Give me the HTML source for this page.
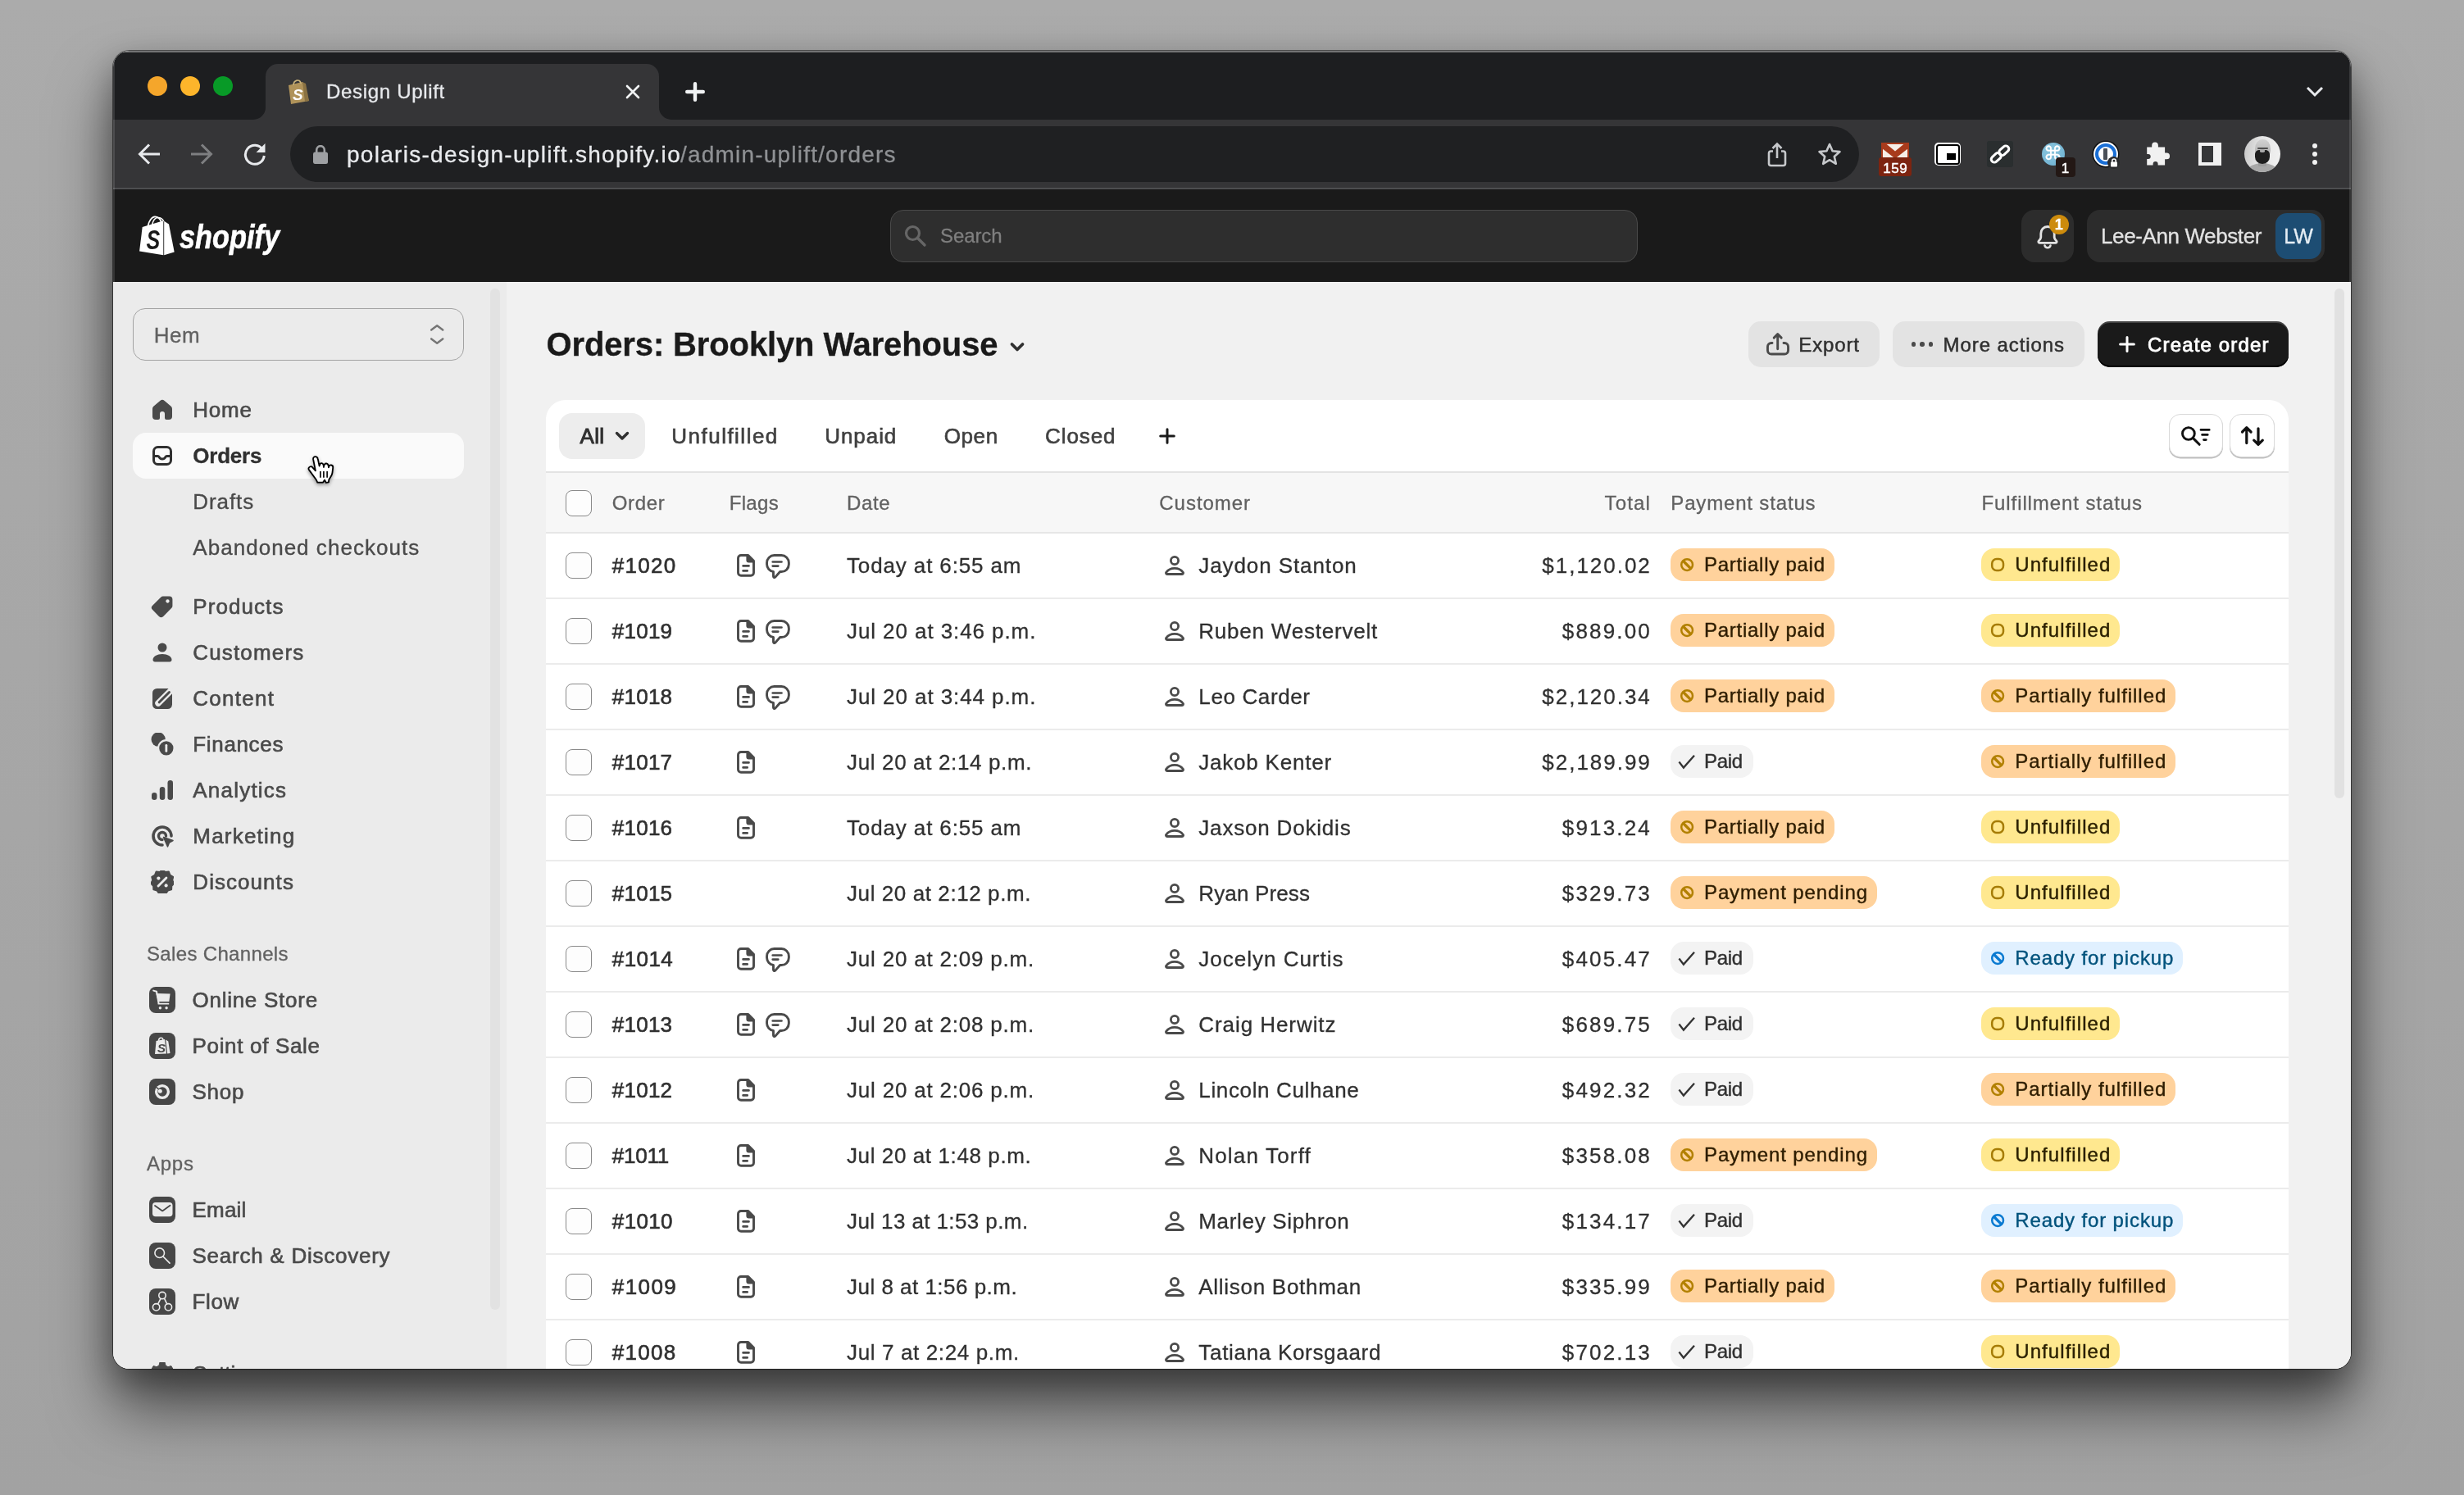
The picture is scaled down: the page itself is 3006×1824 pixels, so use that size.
<!DOCTYPE html>
<html lang="en"><head><meta charset="utf-8"><title>Design Uplift</title>
<style>

*{box-sizing:border-box;margin:0;padding:0}
html,body{width:3006px;height:1824px;overflow:hidden}
body{background:#a6a6a6;font-family:"Liberation Sans",sans-serif;position:relative;-webkit-font-smoothing:antialiased}
#bg{position:absolute;left:0;top:0;width:3006px;height:1824px;background:linear-gradient(180deg,#ababab 0%,#a6a6a6 55%,#a2a2a2 100%)}
#shadow{position:absolute;left:138px;top:62px;width:2730px;height:1608px;border-radius:20px;
 box-shadow:0 0 0 1px rgba(0,0,0,.5),0 48px 76px 0 rgba(0,0,0,.54),0 14px 38px rgba(0,0,0,.3)}
#win{position:absolute;left:138px;top:62px;width:2730px;height:1608px;border-radius:20px;overflow:hidden;background:#f1f1f1}
#in{position:absolute;left:-138px;top:-62px;width:3006px;height:1824px;will-change:transform}
#in div,#in span.t,#in svg{position:absolute}
span.t{white-space:nowrap;display:block;-webkit-text-stroke:0.3px}
.cb{border:1.7px solid #8a8a8a;border-radius:8px;background:#fdfdfd}
.rowline{background:#ebebeb}
.bdg{border-radius:16px}

</style></head>
<body>
<div id="bg"></div>
<div id="shadow"></div>
<div id="win"><div id="in">
<div style="left:138px;top:344px;width:480px;height:1330px;background:#ebebeb"></div>
<div style="left:598px;top:352px;width:12px;height:1246px;background:#e2e2e2;border-radius:6px"></div>
<div style="left:162px;top:376px;width:404px;height:64px;border:1.300px solid #a3a3a3;border-radius:15px;background:#ebebeb"></div>
<span class="t" style="top:390.5px;height:36px;line-height:36px;font-size:26px;color:#616161;letter-spacing:0.547px;left:187.7px;">Hem</span>
<svg style="left:521px;top:390px;" width="24" height="36" viewBox="0 0 24 36"><path d="M5.200 12.600 L12.200 7.300 L19.200 12.600 M5.200 23.400 L12.200 28.700 L19.200 23.400" stroke="#767676" stroke-width="2.500" fill="none" stroke-linecap="round" stroke-linejoin="round"/></svg>
<div style="left:162px;top:528px;width:404px;height:56px;background:#fafafa;border-radius:16px"></div>
<svg style="left:184px;top:486px;" width="28" height="28" viewBox="0 0 28 28"><path d="M14 1.800 c-.9 0 -1.700 .3 -2.400 .9 L3.600 9.600 C2.600 10.500 2 11.700 2 13 V22 a4 4 0 0 0 4 4 H9 a2 2 0 0 0 2 -2 V19 a3 3 0 0 1 6 0 V24 a2 2 0 0 0 2 2 H22 a4 4 0 0 0 4 -4 V13 c0 -1.300 -.6 -2.500 -1.600 -3.400 L16.400 2.700 C15.700 2.100 14.900 1.800 14 1.800Z" fill="#4a4a4a"/></svg>
<span class="t" style="top:482px;height:36px;line-height:36px;font-size:26px;color:#4a4a4a;font-weight:500;letter-spacing:0.747px;left:235.3px;-webkit-text-stroke:0.62px #4a4a4a;">Home</span>
<svg style="left:184px;top:542px;" width="28" height="28" viewBox="0 0 28 28"><rect x="3.500" y="3.500" width="21" height="21" rx="5" stroke="#303030" stroke-width="3" fill="none"/><path d="M3.500 14.500 H8.500 c.8 0 1.300 .5 1.700 1.200 c.8 1.400 2 2.300 3.800 2.300 s3 -.9 3.800 -2.300 c.4 -.7 .9 -1.200 1.700 -1.200 H24.500" stroke="#303030" stroke-width="3" fill="none"/></svg>
<span class="t" style="top:538px;height:36px;line-height:36px;font-size:26px;color:#303030;font-weight:700;letter-spacing:-0.233px;left:235.3px;">Orders</span>
<span class="t" style="top:594px;height:36px;line-height:36px;font-size:26px;color:#4a4a4a;letter-spacing:0.911px;left:235.3px;-webkit-text-stroke:0.35px;">Drafts</span>
<span class="t" style="top:650px;height:36px;line-height:36px;font-size:26px;color:#4a4a4a;letter-spacing:1.033px;left:235.3px;-webkit-text-stroke:0.35px;">Abandoned checkouts</span>
<svg style="left:184px;top:726px;" width="28" height="28" viewBox="0 0 28 28"><g transform="translate(-1.12 -1.12) scale(1.08)"><path d="M14.800 2.500 H22 a3.500 3.500 0 0 1 3.500 3.500 V13.200 c0 .9 -.4 1.800 -1 2.500 L15.200 25 a3.500 3.500 0 0 1 -5 0 L3 17.800 a3.500 3.500 0 0 1 0 -5 L12.300 3.500 c.7 -.6 1.600 -1 2.500 -1Z" fill="#4a4a4a"/><circle cx="20" cy="8" r="2" fill="#ebebeb"/></g></svg>
<span class="t" style="top:722px;height:36px;line-height:36px;font-size:26px;color:#4a4a4a;font-weight:500;letter-spacing:1.070px;left:235.3px;-webkit-text-stroke:0.62px #4a4a4a;">Products</span>
<svg style="left:184px;top:782px;" width="28" height="28" viewBox="0 0 28 28"><circle cx="14" cy="8" r="5.500" fill="#4a4a4a"/><path d="M2.500 23 c0 -4 5 -7 11.500 -7 s11.500 3 11.500 7 c0 1.500 -1 2.500 -2.500 2.500 H5 c-1.500 0 -2.500 -1 -2.500 -2.500Z" fill="#4a4a4a"/></svg>
<span class="t" style="top:778px;height:36px;line-height:36px;font-size:26px;color:#4a4a4a;font-weight:500;letter-spacing:1.150px;left:235.3px;-webkit-text-stroke:0.62px #4a4a4a;">Customers</span>
<svg style="left:184px;top:838px;" width="28" height="28" viewBox="0 0 28 28"><rect x="2" y="2" width="24" height="25" rx="5.5" fill="#4a4a4a"/><path d="M9 20 L24.500 4.500" stroke="#ebebeb" stroke-width="7.5" stroke-linecap="round"/><path d="M7 22.500 L8.300 17.500 L12.300 21.300 Z" fill="#ebebeb"/><path d="M10.200 18.800 L22.500 6.500" stroke="#4a4a4a" stroke-width="3" stroke-linecap="round"/></svg>
<span class="t" style="top:834px;height:36px;line-height:36px;font-size:26px;color:#4a4a4a;font-weight:500;letter-spacing:1.254px;left:235.3px;-webkit-text-stroke:0.62px #4a4a4a;">Content</span>
<svg style="left:184px;top:894px;" width="28" height="28" viewBox="0 0 28 28"><g transform="translate(-1.12 -1.12) scale(1.08)"><circle cx="9.500" cy="8.500" r="8" fill="#4a4a4a"/><circle cx="18.500" cy="18.500" r="10" fill="#ebebeb"/><circle cx="18.500" cy="18.500" r="8" fill="#4a4a4a"/><rect x="17.200" y="14" width="2.600" height="9" rx="1.200" fill="#ebebeb"/></g></svg>
<span class="t" style="top:890px;height:36px;line-height:36px;font-size:26px;color:#4a4a4a;font-weight:500;letter-spacing:0.657px;left:235.3px;-webkit-text-stroke:0.62px #4a4a4a;">Finances</span>
<svg style="left:184px;top:950px;" width="28" height="28" viewBox="0 0 28 28"><rect x="1" y="17" width="6.500" height="9" rx="3.200" fill="#4a4a4a"/><rect x="10.800" y="10" width="6.500" height="16" rx="3.200" fill="#4a4a4a"/><rect x="20.500" y="2" width="6.500" height="24" rx="3.200" fill="#4a4a4a"/></svg>
<span class="t" style="top:946px;height:36px;line-height:36px;font-size:26px;color:#4a4a4a;font-weight:500;letter-spacing:1.219px;left:235.3px;-webkit-text-stroke:0.62px #4a4a4a;">Analytics</span>
<svg style="left:184px;top:1006px;" width="28" height="28" viewBox="0 0 28 28"><path d="M25 14 a11 11 0 1 0 -11 11" stroke="#4a4a4a" stroke-width="3.600" fill="none" stroke-linecap="round"/><path d="M18.500 14 a4.500 4.500 0 1 0 -4.500 4.500" stroke="#4a4a4a" stroke-width="3.400" fill="none" stroke-linecap="round"/><path d="M15.500 15.500 L27 19.500 L22.500 22 L20.500 27 Z" fill="#4a4a4a" stroke="#4a4a4a" stroke-width="1.500" stroke-linejoin="round"/></svg>
<span class="t" style="top:1002px;height:36px;line-height:36px;font-size:26px;color:#4a4a4a;font-weight:500;letter-spacing:1.218px;left:235.3px;-webkit-text-stroke:0.62px #4a4a4a;">Marketing</span>
<svg style="left:184px;top:1062px;" width="28" height="28" viewBox="0 0 28 28"><g transform="translate(-1.40 -1.40) scale(1.1)"><path d="M14 .8 l3.200 2.300 l3.900 -.3 l1.400 3.700 l3.400 1.900 l-.9 3.800 l1.900 3.400 l-2.700 2.900 l-.2 3.900 l-3.800 1 l-2.200 3.200 l-3.800 -1.100 l-3.800 1.100 l-2.200 -3.200 l-3.800 -1 l-.2 -3.900 l-2.700 -2.900 l1.900 -3.400 l-.9 -3.800 l3.400 -1.900 l1.400 -3.700 l3.900 .3 Z" fill="#4a4a4a" stroke="#4a4a4a" stroke-width="2" stroke-linejoin="round"/><path d="M9.500 18.500 L18.500 9.500" stroke="#ebebeb" stroke-width="2.600" stroke-linecap="round"/><circle cx="9.800" cy="10" r="1.900" fill="#ebebeb"/><circle cx="18.200" cy="18" r="1.900" fill="#ebebeb"/></g></svg>
<span class="t" style="top:1058px;height:36px;line-height:36px;font-size:26px;color:#4a4a4a;font-weight:500;letter-spacing:1.055px;left:235.3px;-webkit-text-stroke:0.62px #4a4a4a;">Discounts</span>
<span class="t" style="top:1147px;height:34px;line-height:34px;font-size:24px;color:#616161;letter-spacing:0.338px;left:179px;">Sales Channels</span>
<span class="t" style="top:1403px;height:34px;line-height:34px;font-size:24px;color:#616161;letter-spacing:0.732px;left:179px;">Apps</span>
<div style="left:182px;top:1204px;width:32px;height:32px;background:#474747;border-radius:8px"></div>
<svg style="left:182px;top:1204px;" width="32" height="32" viewBox="0 0 32 32"><path d="M5.2 4.6 L9 5.8 L11.5 19.800" stroke="#ebebeb" stroke-width="2" fill="none" stroke-linejoin="round" stroke-linecap="round"/><path d="M8.300 8 L25.600 8.500 L24.300 18 H10.900 Z" fill="#ebebeb"/><path d="M11.400 20.700 H23.400" stroke="#ebebeb" stroke-width="1.800" stroke-linecap="round"/><circle cx="13.400" cy="25.800" r="1.700" fill="#ebebeb"/><circle cx="21.100" cy="25.800" r="1.700" fill="#ebebeb"/></svg>
<span class="t" style="top:1202px;height:36px;line-height:36px;font-size:26px;color:#4a4a4a;font-weight:500;letter-spacing:0.734px;left:234.5px;-webkit-text-stroke:0.62px #4a4a4a;">Online Store</span>
<div style="left:182px;top:1260px;width:32px;height:32px;background:#474747;border-radius:8px"></div>
<svg style="left:182px;top:1260px;" width="32" height="32" viewBox="0 0 32 32"><path d="M8.500 10 L19 8 L21 25.500 L7 26 Z" fill="#ebebeb"/><path d="M20.200 8.500 L23.300 10.500 L25.500 25 L22.200 25.500 Z" fill="#ebebeb"/><path d="M11.500 10 C11.500 6 16.500 4.500 17 9" stroke="#ebebeb" stroke-width="1.600" fill="none"/><text x="10" y="23.500" font-family="Liberation Sans" font-weight="700" font-style="italic" font-size="15" fill="#474747">S</text></svg>
<span class="t" style="top:1258px;height:36px;line-height:36px;font-size:26px;color:#4a4a4a;font-weight:500;letter-spacing:0.672px;left:234.5px;-webkit-text-stroke:0.62px #4a4a4a;">Point of Sale</span>
<div style="left:182px;top:1316px;width:32px;height:32px;background:#474747;border-radius:8px"></div>
<svg style="left:182px;top:1316px;" width="32" height="32" viewBox="0 0 32 32"><circle cx="16" cy="16" r="7.4" stroke="#ebebeb" stroke-width="3.3" fill="none"/><circle cx="13.3" cy="15.2" r="2.5" fill="#ebebeb"/><path d="M6.5 8.800 L11.600 12.800" stroke="#474747" stroke-width="1.500"/></svg>
<span class="t" style="top:1314px;height:36px;line-height:36px;font-size:26px;color:#4a4a4a;font-weight:500;letter-spacing:0.722px;left:234.5px;-webkit-text-stroke:0.62px #4a4a4a;">Shop</span>
<div style="left:182px;top:1460px;width:32px;height:32px;background:#474747;border-radius:8px"></div>
<svg style="left:182px;top:1460px;" width="32" height="32" viewBox="0 0 32 32"><rect x="4" y="7" width="24.500" height="17.200" rx="3.800" fill="#ebebeb"/><path d="M7 10.900 L16.200 17.400 L25.500 10.700" stroke="#474747" stroke-width="1.800" fill="none" stroke-linecap="round" stroke-linejoin="round"/></svg>
<span class="t" style="top:1458px;height:36px;line-height:36px;font-size:26px;color:#4a4a4a;font-weight:500;letter-spacing:0.196px;left:234.5px;-webkit-text-stroke:0.62px #4a4a4a;">Email</span>
<div style="left:182px;top:1516px;width:32px;height:32px;background:#474747;border-radius:8px"></div>
<svg style="left:182px;top:1516px;" width="32" height="32" viewBox="0 0 32 32"><circle cx="12.700" cy="12.700" r="5.800" stroke="#ebebeb" stroke-width="1.600" fill="none"/><path d="M17 17 L25 25.200" stroke="#ebebeb" stroke-width="1.700" stroke-linecap="round"/></svg>
<span class="t" style="top:1514px;height:36px;line-height:36px;font-size:26px;color:#4a4a4a;font-weight:500;letter-spacing:0.752px;left:234.5px;-webkit-text-stroke:0.62px #4a4a4a;">Search &amp; Discovery</span>
<div style="left:182px;top:1572px;width:32px;height:32px;background:#474747;border-radius:8px"></div>
<svg style="left:182px;top:1572px;" width="32" height="32" viewBox="0 0 32 32"><circle cx="16" cy="8.600" r="4.200" stroke="#ebebeb" stroke-width="1.600" fill="none"/><circle cx="8.600" cy="22.800" r="4.200" stroke="#ebebeb" stroke-width="1.600" fill="none"/><circle cx="23.400" cy="22.800" r="4.200" stroke="#ebebeb" stroke-width="1.600" fill="none"/><path d="M13.900 12.600 L10.700 18.800 M18.600 12.300 L21.600 18.700" stroke="#ebebeb" stroke-width="1.600" fill="none"/></svg>
<span class="t" style="top:1570px;height:36px;line-height:36px;font-size:26px;color:#4a4a4a;font-weight:500;letter-spacing:0.665px;left:234.5px;-webkit-text-stroke:0.62px #4a4a4a;">Flow</span>
<svg style="left:184px;top:1661.7px;" width="28" height="28" viewBox="0 0 28 28"><path d="M11 0 h6 l1 4 l3 1.700 l3.800 -1.200 l3 5.200 l-2.800 2.800 v3 l2.800 2.800 l-3 5.200 l-3.800 -1.200 l-3 1.700 l-1 4 h-6 l-1 -4 l-3 -1.700 l-3.800 1.200 l-3 -5.200 l2.800 -2.800 v-3 l-2.800 -2.800 l3 -5.200 l3.800 1.200 l3 -1.700 Z" fill="#4a4a4a" stroke="#4a4a4a" stroke-width="1" stroke-linejoin="round"/></svg>
<span class="t" style="top:1658px;height:36px;line-height:36px;font-size:26px;color:#4a4a4a;font-weight:500;left:235.3px;-webkit-text-stroke:0.62px #4a4a4a;">Settings</span>
<div style="left:618px;top:344px;width:2250px;height:1330px;background:#f1f1f1"></div>
<div style="left:2848px;top:352px;width:12px;height:622px;background:#e1e1e1;border-radius:6px"></div>
<span class="t" style="top:392px;height:56px;line-height:56px;font-size:40px;color:#1a1a1a;font-weight:700;letter-spacing:-0.128px;left:666.5px;">Orders: Brooklyn Warehouse</span>
<svg style="left:1231px;top:416px;" width="20" height="16" viewBox="0 0 20 16"><path d="M3.500 4 L10 10.500 L16.500 4" stroke="#303030" stroke-width="3.800" fill="none" stroke-linecap="round" stroke-linejoin="round"/></svg>
<div style="left:2133px;top:392px;width:160px;height:56px;background:#e3e3e3;border-radius:15px"></div>
<svg style="left:2152px;top:403px;" width="34" height="34" viewBox="0 0 34 34"><path d="M10 15.450 H9 a4.550 4.550 0 0 0 -4.550 4.550 V24.500 a4.550 4.550 0 0 0 4.550 4.550 H25 a4.550 4.550 0 0 0 4.550 -4.550 V20 a4.550 4.550 0 0 0 -4.550 -4.550 H24" stroke="#4a4a4a" stroke-width="2.900" fill="none" stroke-linecap="round"/><path d="M16.700 22.800 V4.800 M12.200 9.100 L16.700 4.600 L21.200 9.100" stroke="#4a4a4a" stroke-width="2.900" fill="none" stroke-linecap="round" stroke-linejoin="round"/></svg>
<span class="t" style="top:403.8px;height:34px;line-height:34px;font-size:24px;color:#303030;letter-spacing:0.865px;left:2194.3px;-webkit-text-stroke:0.500px;">Export</span>
<div style="left:2309px;top:392px;width:234px;height:56px;background:#e3e3e3;border-radius:15px"></div>
<div style="left:2331.8px;top:417.3px;width:5.4px;height:5.4px;background:#4a4a4a;border-radius:50%"></div>
<div style="left:2342.3px;top:417.3px;width:5.4px;height:5.4px;background:#4a4a4a;border-radius:50%"></div>
<div style="left:2352.7000000000003px;top:417.3px;width:5.4px;height:5.4px;background:#4a4a4a;border-radius:50%"></div>
<span class="t" style="top:403.8px;height:34px;line-height:34px;font-size:24px;color:#303030;letter-spacing:0.919px;left:2370.6px;-webkit-text-stroke:0.500px;">More actions</span>
<div style="left:2559px;top:392px;width:233px;height:56px;background:#1a1a1a;border-radius:15px;box-shadow:inset 0 -2px 0 #000, inset 0 2px 0 rgba(255,255,255,.18)"></div>
<svg style="left:2583.8px;top:409.2px;" width="22" height="22" viewBox="0 0 22 22"><path d="M11 2.600 V19.400 M2.600 11 H19.400" stroke="#fff" stroke-width="3" stroke-linecap="round"/></svg>
<span class="t" style="top:403.8px;height:34px;line-height:34px;font-size:24px;color:#ffffff;letter-spacing:1.161px;left:2620px;-webkit-text-stroke:0.800px;">Create order</span>
<div style="left:666px;top:488px;width:2126px;height:1200px;background:#ffffff;border-radius:24px 24px 0 0"></div>
<div style="left:682px;top:504px;width:105px;height:56px;background:#ededed;border-radius:16px"></div>
<span class="t" style="top:514px;height:36px;line-height:36px;font-size:26px;color:#303030;letter-spacing:0.297px;left:707.5px;-webkit-text-stroke:0.95px;">All</span>
<svg style="left:750px;top:525px;" width="18" height="14" viewBox="0 0 18 14"><path d="M2.500 3.500 L9 10 L15.500 3.500" stroke="#303030" stroke-width="3.400" fill="none" stroke-linecap="round" stroke-linejoin="round"/></svg>
<span class="t" style="top:514px;height:36px;line-height:36px;font-size:26px;color:#404040;letter-spacing:1.483px;left:819.3px;-webkit-text-stroke:0.62px;">Unfulfilled</span>
<span class="t" style="top:514px;height:36px;line-height:36px;font-size:26px;color:#404040;letter-spacing:0.919px;left:1006.3px;-webkit-text-stroke:0.62px;">Unpaid</span>
<span class="t" style="top:514px;height:36px;line-height:36px;font-size:26px;color:#404040;letter-spacing:0.564px;left:1151.8px;-webkit-text-stroke:0.62px;">Open</span>
<span class="t" style="top:514px;height:36px;line-height:36px;font-size:26px;color:#404040;letter-spacing:0.912px;left:1275px;-webkit-text-stroke:0.62px;">Closed</span>
<svg style="left:1412.8px;top:521.2px;" width="22" height="22" viewBox="0 0 22 22"><path d="M11 2.700 V19.300 M2.700 11 H19.300" stroke="#1a1a1a" stroke-width="3" stroke-linecap="round"/></svg>
<div style="left:2645.5px;top:504.6px;width:66px;height:53.6px;background:#fff;border-radius:14px;border:1.600px solid #d9d9d9;box-shadow:0 1.400px 0 #bdbdbd"></div>
<svg style="left:2655px;top:515px;" width="48" height="34" viewBox="0 0 48 34"><circle cx="14.900" cy="14" r="7.400" stroke="#111" stroke-width="2.900" fill="none"/><path d="M20.300 19.400 L28.200 27.300" stroke="#111" stroke-width="3" stroke-linecap="round"/><path d="M30.050 9.400 H40.150 M31.650 15.400 H38.150 M33.550 21.600 H36.250" stroke="#111" stroke-width="2.900" stroke-linecap="round"/></svg>
<div style="left:2720.3px;top:504.6px;width:55.2px;height:53.6px;background:#fff;border-radius:14px;border:1.600px solid #d9d9d9;box-shadow:0 1.400px 0 #bdbdbd"></div>
<svg style="left:2728px;top:515px;" width="40" height="34" viewBox="0 0 40 34"><path d="M12.800 25.600 V6.800 M7.500 12 L12.800 6.700 L18.100 12" stroke="#111" stroke-width="3.200" fill="none" stroke-linecap="round" stroke-linejoin="round"/><path d="M27 7.800 V27.300 M21.700 22.100 L27 27.400 L32.300 22.100" stroke="#111" stroke-width="3.200" fill="none" stroke-linecap="round" stroke-linejoin="round"/></svg>
<div style="left:666px;top:575px;width:2126px;height:2px;background:#e3e3e3"></div>
<div style="left:666px;top:577px;width:2126px;height:72px;background:#f7f7f7"></div>
<div style="left:666px;top:649px;width:2126px;height:2px;background:#e6e6e6"></div>
<div class="cb" style="left:690px;top:598px;width:32px;height:32px;"></div>
<span class="t" style="top:596.5px;height:34px;line-height:34px;font-size:24px;color:#616161;letter-spacing:0.660px;left:746.8px;">Order</span>
<span class="t" style="top:596.5px;height:34px;line-height:34px;font-size:24px;color:#616161;letter-spacing:0.328px;left:889.7px;">Flags</span>
<span class="t" style="top:596.5px;height:34px;line-height:34px;font-size:24px;color:#616161;letter-spacing:0.599px;left:1033px;">Date</span>
<span class="t" style="top:596.5px;height:34px;line-height:34px;font-size:24px;color:#616161;letter-spacing:0.967px;left:1414.3px;">Customer</span>
<span class="t" style="top:596.5px;height:34px;line-height:34px;font-size:24px;color:#616161;letter-spacing:1.149px;right:992.051px;">Total</span>
<span class="t" style="top:596.5px;height:34px;line-height:34px;font-size:24px;color:#616161;letter-spacing:0.837px;left:2038.3px;">Payment status</span>
<span class="t" style="top:596.5px;height:34px;line-height:34px;font-size:24px;color:#616161;letter-spacing:0.908px;left:2417.5px;">Fulfillment status</span>
<div class="cb" style="left:690px;top:673.5px;width:32px;height:32px;"></div>
<span class="t" style="top:671.5px;height:36px;line-height:36px;font-size:26px;color:#303030;letter-spacing:1.297px;left:746.8px;-webkit-text-stroke:0.62px;">#1020</span>
<svg style="left:897px;top:674px;" width="26" height="32" viewBox="0 0 26 32"><path d="M7 3.5 H15.8 L22.5 10.2 V24.8 a3.5 3.5 0 0 1 -3.5 3.5 H7 a3.5 3.5 0 0 1 -3.5 -3.5 V7 a3.5 3.5 0 0 1 3.5 -3.5Z" stroke="#4a4a4a" stroke-width="2.9" fill="none" stroke-linejoin="round"/><path d="M13.4 3 V9.5 a3 3 0 0 0 3 3 H23 L16 4 Z" fill="#4a4a4a"/><path d="M9.6 16.4 H16.5 M9.6 22.4 H14.7" stroke="#4a4a4a" stroke-width="2.7" stroke-linecap="round"/></svg>
<svg style="left:932px;top:674px;" width="34" height="34" viewBox="0 0 34 34"><path d="M12.55 3.55 H21.35 A9 9 0 0 1 30.35 12.55 V14.55 A9 9 0 0 1 21.35 23.55 H19.6 L13.8 30.1 C12.9 31.1 11.5 30.5 11.5 29.3 V23.4 A9 9 0 0 1 3.55 14.55 V12.55 A9 9 0 0 1 12.55 3.55 Z" stroke="#4a4a4a" stroke-width="2.9" fill="none" stroke-linejoin="round"/><path d="M10.7 11.5 H21.5 M10.7 16.6 H17.3" stroke="#4a4a4a" stroke-width="2.7" stroke-linecap="round"/></svg>
<span class="t" style="top:671.5px;height:36px;line-height:36px;font-size:26px;color:#303030;letter-spacing:0.869px;left:1033px;">Today at 6:55 am</span>
<svg style="left:1419px;top:676px;" width="28" height="28" viewBox="0 0 28 28"><circle cx="14" cy="8" r="4.6" stroke="#4a4a4a" stroke-width="2.8" fill="none"/><path d="M4.9 24.5 c-1.3 0 -1.9 -1.3 -1.1 -2.3 C6 19 9.6 17.3 14 17.3 s8 1.700 10.2 4.900 c.8 1 .2 2.300 -1.100 2.300 Z" stroke="#4a4a4a" stroke-width="2.8" fill="none" stroke-linejoin="round"/></svg>
<span class="t" style="top:671.5px;height:36px;line-height:36px;font-size:26px;color:#303030;letter-spacing:0.907px;left:1462.3px;">Jaydon Stanton</span>
<span class="t" style="top:671.5px;height:36px;line-height:36px;font-size:26px;color:#303030;letter-spacing:1.979px;right:991.221px;">$1,120.02</span>
<div class="bdg" style="left:2038px;top:669.0px;width:199.5px;height:40px;background:#ffd29c"></div>
<svg style="left:2049px;top:680px;" width="18" height="18" viewBox="0 0 18 18"><circle cx="9.1" cy="9.1" r="6.9" stroke="#b28000" stroke-width="2.5" fill="none"/><path d="M4.3 4.3 L13.9 13.9" stroke="#b28000" stroke-width="3.4"/></svg>
<span class="t" style="top:672px;height:34px;line-height:34px;font-size:24px;color:#2e1d00;letter-spacing:0.738px;left:2079px;-webkit-text-stroke:0.4px #2e1d00;">Partially paid</span>
<div class="bdg" style="left:2417.3px;top:669.0px;width:168.5px;height:40px;background:#ffe88f"></div>
<svg style="left:2427.8px;top:680px;" width="18" height="18" viewBox="0 0 18 18"><rect x="2.2" y="2.1" width="13.8" height="13.9" rx="5.6" stroke="#a67c05" stroke-width="2.5" fill="none"/></svg>
<span class="t" style="top:672px;height:34px;line-height:34px;font-size:24px;color:#2b2000;letter-spacing:1.061px;left:2458.3px;-webkit-text-stroke:0.4px #2b2000;">Unfulfilled</span>
<div class="rowline" style="left:666px;top:728.5px;width:2126px;height:2px;"></div>
<div class="cb" style="left:690px;top:753.5px;width:32px;height:32px;"></div>
<span class="t" style="top:751.5px;height:36px;line-height:36px;font-size:26px;color:#303030;letter-spacing:0.247px;left:746.8px;-webkit-text-stroke:0.62px;">#1019</span>
<svg style="left:897px;top:754px;" width="26" height="32" viewBox="0 0 26 32"><path d="M7 3.5 H15.8 L22.5 10.2 V24.8 a3.5 3.5 0 0 1 -3.5 3.5 H7 a3.5 3.5 0 0 1 -3.5 -3.5 V7 a3.5 3.5 0 0 1 3.5 -3.5Z" stroke="#4a4a4a" stroke-width="2.9" fill="none" stroke-linejoin="round"/><path d="M13.4 3 V9.5 a3 3 0 0 0 3 3 H23 L16 4 Z" fill="#4a4a4a"/><path d="M9.6 16.4 H16.5 M9.6 22.4 H14.7" stroke="#4a4a4a" stroke-width="2.7" stroke-linecap="round"/></svg>
<svg style="left:932px;top:754px;" width="34" height="34" viewBox="0 0 34 34"><path d="M12.55 3.55 H21.35 A9 9 0 0 1 30.35 12.55 V14.55 A9 9 0 0 1 21.35 23.55 H19.6 L13.8 30.1 C12.9 31.1 11.5 30.5 11.5 29.3 V23.4 A9 9 0 0 1 3.55 14.55 V12.55 A9 9 0 0 1 12.55 3.55 Z" stroke="#4a4a4a" stroke-width="2.9" fill="none" stroke-linejoin="round"/><path d="M10.7 11.5 H21.5 M10.7 16.6 H17.3" stroke="#4a4a4a" stroke-width="2.7" stroke-linecap="round"/></svg>
<span class="t" style="top:751.5px;height:36px;line-height:36px;font-size:26px;color:#303030;letter-spacing:0.916px;left:1033px;">Jul 20 at 3:46 p.m.</span>
<svg style="left:1419px;top:756px;" width="28" height="28" viewBox="0 0 28 28"><circle cx="14" cy="8" r="4.6" stroke="#4a4a4a" stroke-width="2.8" fill="none"/><path d="M4.9 24.5 c-1.3 0 -1.9 -1.3 -1.1 -2.3 C6 19 9.6 17.3 14 17.3 s8 1.700 10.2 4.900 c.8 1 .2 2.300 -1.100 2.300 Z" stroke="#4a4a4a" stroke-width="2.8" fill="none" stroke-linejoin="round"/></svg>
<span class="t" style="top:751.5px;height:36px;line-height:36px;font-size:26px;color:#303030;letter-spacing:0.789px;left:1462.3px;">Ruben Westervelt</span>
<span class="t" style="top:751.5px;height:36px;line-height:36px;font-size:26px;color:#303030;letter-spacing:2.169px;right:991.031px;">$889.00</span>
<div class="bdg" style="left:2038px;top:749.0px;width:199.5px;height:40px;background:#ffd29c"></div>
<svg style="left:2049px;top:760px;" width="18" height="18" viewBox="0 0 18 18"><circle cx="9.1" cy="9.1" r="6.9" stroke="#b28000" stroke-width="2.5" fill="none"/><path d="M4.3 4.3 L13.9 13.9" stroke="#b28000" stroke-width="3.4"/></svg>
<span class="t" style="top:752px;height:34px;line-height:34px;font-size:24px;color:#2e1d00;letter-spacing:0.738px;left:2079px;-webkit-text-stroke:0.4px #2e1d00;">Partially paid</span>
<div class="bdg" style="left:2417.3px;top:749.0px;width:168.5px;height:40px;background:#ffe88f"></div>
<svg style="left:2427.8px;top:760px;" width="18" height="18" viewBox="0 0 18 18"><rect x="2.2" y="2.1" width="13.8" height="13.9" rx="5.6" stroke="#a67c05" stroke-width="2.5" fill="none"/></svg>
<span class="t" style="top:752px;height:34px;line-height:34px;font-size:24px;color:#2b2000;letter-spacing:1.061px;left:2458.3px;-webkit-text-stroke:0.4px #2b2000;">Unfulfilled</span>
<div class="rowline" style="left:666px;top:808.5px;width:2126px;height:2px;"></div>
<div class="cb" style="left:690px;top:833.5px;width:32px;height:32px;"></div>
<span class="t" style="top:831.5px;height:36px;line-height:36px;font-size:26px;color:#303030;letter-spacing:0.247px;left:746.8px;-webkit-text-stroke:0.62px;">#1018</span>
<svg style="left:897px;top:834px;" width="26" height="32" viewBox="0 0 26 32"><path d="M7 3.5 H15.8 L22.5 10.2 V24.8 a3.5 3.5 0 0 1 -3.5 3.5 H7 a3.5 3.5 0 0 1 -3.5 -3.5 V7 a3.5 3.5 0 0 1 3.5 -3.5Z" stroke="#4a4a4a" stroke-width="2.9" fill="none" stroke-linejoin="round"/><path d="M13.4 3 V9.5 a3 3 0 0 0 3 3 H23 L16 4 Z" fill="#4a4a4a"/><path d="M9.6 16.4 H16.5 M9.6 22.4 H14.7" stroke="#4a4a4a" stroke-width="2.7" stroke-linecap="round"/></svg>
<svg style="left:932px;top:834px;" width="34" height="34" viewBox="0 0 34 34"><path d="M12.55 3.55 H21.35 A9 9 0 0 1 30.35 12.55 V14.55 A9 9 0 0 1 21.35 23.55 H19.6 L13.8 30.1 C12.9 31.1 11.5 30.5 11.5 29.3 V23.4 A9 9 0 0 1 3.55 14.55 V12.55 A9 9 0 0 1 12.55 3.55 Z" stroke="#4a4a4a" stroke-width="2.9" fill="none" stroke-linejoin="round"/><path d="M10.7 11.5 H21.5 M10.7 16.6 H17.3" stroke="#4a4a4a" stroke-width="2.7" stroke-linecap="round"/></svg>
<span class="t" style="top:831.5px;height:36px;line-height:36px;font-size:26px;color:#303030;letter-spacing:0.916px;left:1033px;">Jul 20 at 3:44 p.m.</span>
<svg style="left:1419px;top:836px;" width="28" height="28" viewBox="0 0 28 28"><circle cx="14" cy="8" r="4.6" stroke="#4a4a4a" stroke-width="2.8" fill="none"/><path d="M4.9 24.5 c-1.3 0 -1.9 -1.3 -1.1 -2.3 C6 19 9.6 17.3 14 17.3 s8 1.700 10.2 4.900 c.8 1 .2 2.300 -1.100 2.300 Z" stroke="#4a4a4a" stroke-width="2.8" fill="none" stroke-linejoin="round"/></svg>
<span class="t" style="top:831.5px;height:36px;line-height:36px;font-size:26px;color:#303030;letter-spacing:0.625px;left:1462.3px;">Leo Carder</span>
<span class="t" style="top:831.5px;height:36px;line-height:36px;font-size:26px;color:#303030;letter-spacing:1.979px;right:991.221px;">$2,120.34</span>
<div class="bdg" style="left:2038px;top:829.0px;width:199.5px;height:40px;background:#ffd29c"></div>
<svg style="left:2049px;top:840px;" width="18" height="18" viewBox="0 0 18 18"><circle cx="9.1" cy="9.1" r="6.9" stroke="#b28000" stroke-width="2.5" fill="none"/><path d="M4.3 4.3 L13.9 13.9" stroke="#b28000" stroke-width="3.4"/></svg>
<span class="t" style="top:832px;height:34px;line-height:34px;font-size:24px;color:#2e1d00;letter-spacing:0.738px;left:2079px;-webkit-text-stroke:0.4px #2e1d00;">Partially paid</span>
<div class="bdg" style="left:2417.3px;top:829.0px;width:236.5px;height:40px;background:#ffd29c"></div>
<svg style="left:2428.3px;top:840px;" width="18" height="18" viewBox="0 0 18 18"><circle cx="9.1" cy="9.1" r="6.9" stroke="#b28000" stroke-width="2.5" fill="none"/><path d="M4.3 4.3 L13.9 13.9" stroke="#b28000" stroke-width="3.4"/></svg>
<span class="t" style="top:832px;height:34px;line-height:34px;font-size:24px;color:#2e1d00;letter-spacing:0.959px;left:2458.3px;-webkit-text-stroke:0.4px #2e1d00;">Partially fulfilled</span>
<div class="rowline" style="left:666px;top:888.5px;width:2126px;height:2px;"></div>
<div class="cb" style="left:690px;top:913.5px;width:32px;height:32px;"></div>
<span class="t" style="top:911.5px;height:36px;line-height:36px;font-size:26px;color:#303030;letter-spacing:0.247px;left:746.8px;-webkit-text-stroke:0.62px;">#1017</span>
<svg style="left:897px;top:914px;" width="26" height="32" viewBox="0 0 26 32"><path d="M7 3.5 H15.8 L22.5 10.2 V24.8 a3.5 3.5 0 0 1 -3.5 3.5 H7 a3.5 3.5 0 0 1 -3.5 -3.5 V7 a3.5 3.5 0 0 1 3.5 -3.5Z" stroke="#4a4a4a" stroke-width="2.9" fill="none" stroke-linejoin="round"/><path d="M13.4 3 V9.5 a3 3 0 0 0 3 3 H23 L16 4 Z" fill="#4a4a4a"/><path d="M9.6 16.4 H16.5 M9.6 22.4 H14.7" stroke="#4a4a4a" stroke-width="2.7" stroke-linecap="round"/></svg>
<span class="t" style="top:911.5px;height:36px;line-height:36px;font-size:26px;color:#303030;letter-spacing:0.644px;left:1033px;">Jul 20 at 2:14 p.m.</span>
<svg style="left:1419px;top:916px;" width="28" height="28" viewBox="0 0 28 28"><circle cx="14" cy="8" r="4.6" stroke="#4a4a4a" stroke-width="2.8" fill="none"/><path d="M4.9 24.5 c-1.3 0 -1.9 -1.3 -1.1 -2.3 C6 19 9.6 17.3 14 17.3 s8 1.700 10.2 4.900 c.8 1 .2 2.300 -1.100 2.300 Z" stroke="#4a4a4a" stroke-width="2.8" fill="none" stroke-linejoin="round"/></svg>
<span class="t" style="top:911.5px;height:36px;line-height:36px;font-size:26px;color:#303030;letter-spacing:0.780px;left:1462.3px;">Jakob Kenter</span>
<span class="t" style="top:911.5px;height:36px;line-height:36px;font-size:26px;color:#303030;letter-spacing:1.979px;right:991.221px;">$2,189.99</span>
<div class="bdg" style="left:2038px;top:909.0px;width:100.9px;height:40px;background:#f3f3f3"></div>
<svg style="left:2046px;top:919px;" width="24" height="20" viewBox="0 0 24 20"><path d="M2.4 10.5 L7.9 17.6 L21 2.8" stroke="#333333" stroke-width="2.3" fill="none"/></svg>
<span class="t" style="top:912px;height:34px;line-height:34px;font-size:24px;color:#303030;letter-spacing:-0.282px;left:2079px;-webkit-text-stroke:0.4px #303030;">Paid</span>
<div class="bdg" style="left:2417.3px;top:909.0px;width:236.5px;height:40px;background:#ffd29c"></div>
<svg style="left:2428.3px;top:920px;" width="18" height="18" viewBox="0 0 18 18"><circle cx="9.1" cy="9.1" r="6.9" stroke="#b28000" stroke-width="2.5" fill="none"/><path d="M4.3 4.3 L13.9 13.9" stroke="#b28000" stroke-width="3.4"/></svg>
<span class="t" style="top:912px;height:34px;line-height:34px;font-size:24px;color:#2e1d00;letter-spacing:0.959px;left:2458.3px;-webkit-text-stroke:0.4px #2e1d00;">Partially fulfilled</span>
<div class="rowline" style="left:666px;top:968.5px;width:2126px;height:2px;"></div>
<div class="cb" style="left:690px;top:993.5px;width:32px;height:32px;"></div>
<span class="t" style="top:991.5px;height:36px;line-height:36px;font-size:26px;color:#303030;letter-spacing:0.247px;left:746.8px;-webkit-text-stroke:0.62px;">#1016</span>
<svg style="left:897px;top:994px;" width="26" height="32" viewBox="0 0 26 32"><path d="M7 3.5 H15.8 L22.5 10.2 V24.8 a3.5 3.5 0 0 1 -3.5 3.5 H7 a3.5 3.5 0 0 1 -3.5 -3.5 V7 a3.5 3.5 0 0 1 3.5 -3.5Z" stroke="#4a4a4a" stroke-width="2.9" fill="none" stroke-linejoin="round"/><path d="M13.4 3 V9.5 a3 3 0 0 0 3 3 H23 L16 4 Z" fill="#4a4a4a"/><path d="M9.6 16.4 H16.5 M9.6 22.4 H14.7" stroke="#4a4a4a" stroke-width="2.7" stroke-linecap="round"/></svg>
<span class="t" style="top:991.5px;height:36px;line-height:36px;font-size:26px;color:#303030;letter-spacing:0.869px;left:1033px;">Today at 6:55 am</span>
<svg style="left:1419px;top:996px;" width="28" height="28" viewBox="0 0 28 28"><circle cx="14" cy="8" r="4.6" stroke="#4a4a4a" stroke-width="2.8" fill="none"/><path d="M4.9 24.5 c-1.3 0 -1.9 -1.3 -1.1 -2.3 C6 19 9.6 17.3 14 17.3 s8 1.700 10.2 4.900 c.8 1 .2 2.300 -1.100 2.300 Z" stroke="#4a4a4a" stroke-width="2.8" fill="none" stroke-linejoin="round"/></svg>
<span class="t" style="top:991.5px;height:36px;line-height:36px;font-size:26px;color:#303030;letter-spacing:0.811px;left:1462.3px;">Jaxson Dokidis</span>
<span class="t" style="top:991.5px;height:36px;line-height:36px;font-size:26px;color:#303030;letter-spacing:2.169px;right:991.031px;">$913.24</span>
<div class="bdg" style="left:2038px;top:989.0px;width:199.5px;height:40px;background:#ffd29c"></div>
<svg style="left:2049px;top:1000px;" width="18" height="18" viewBox="0 0 18 18"><circle cx="9.1" cy="9.1" r="6.9" stroke="#b28000" stroke-width="2.5" fill="none"/><path d="M4.3 4.3 L13.9 13.9" stroke="#b28000" stroke-width="3.4"/></svg>
<span class="t" style="top:992px;height:34px;line-height:34px;font-size:24px;color:#2e1d00;letter-spacing:0.738px;left:2079px;-webkit-text-stroke:0.4px #2e1d00;">Partially paid</span>
<div class="bdg" style="left:2417.3px;top:989.0px;width:168.5px;height:40px;background:#ffe88f"></div>
<svg style="left:2427.8px;top:1000px;" width="18" height="18" viewBox="0 0 18 18"><rect x="2.2" y="2.1" width="13.8" height="13.9" rx="5.6" stroke="#a67c05" stroke-width="2.5" fill="none"/></svg>
<span class="t" style="top:992px;height:34px;line-height:34px;font-size:24px;color:#2b2000;letter-spacing:1.061px;left:2458.3px;-webkit-text-stroke:0.4px #2b2000;">Unfulfilled</span>
<div class="rowline" style="left:666px;top:1048.5px;width:2126px;height:2px;"></div>
<div class="cb" style="left:690px;top:1073.5px;width:32px;height:32px;"></div>
<span class="t" style="top:1071.5px;height:36px;line-height:36px;font-size:26px;color:#303030;letter-spacing:0.247px;left:746.8px;-webkit-text-stroke:0.62px;">#1015</span>
<span class="t" style="top:1071.5px;height:36px;line-height:36px;font-size:26px;color:#303030;letter-spacing:0.583px;left:1033px;">Jul 20 at 2:12 p.m.</span>
<svg style="left:1419px;top:1076px;" width="28" height="28" viewBox="0 0 28 28"><circle cx="14" cy="8" r="4.6" stroke="#4a4a4a" stroke-width="2.8" fill="none"/><path d="M4.9 24.5 c-1.3 0 -1.9 -1.3 -1.1 -2.3 C6 19 9.6 17.3 14 17.3 s8 1.700 10.2 4.900 c.8 1 .2 2.300 -1.100 2.300 Z" stroke="#4a4a4a" stroke-width="2.8" fill="none" stroke-linejoin="round"/></svg>
<span class="t" style="top:1071.5px;height:36px;line-height:36px;font-size:26px;color:#303030;letter-spacing:0.145px;left:1462.3px;">Ryan Press</span>
<span class="t" style="top:1071.5px;height:36px;line-height:36px;font-size:26px;color:#303030;letter-spacing:2.169px;right:991.031px;">$329.73</span>
<div class="bdg" style="left:2038px;top:1069.0px;width:251.5px;height:40px;background:#ffd29c"></div>
<svg style="left:2049px;top:1080px;" width="18" height="18" viewBox="0 0 18 18"><circle cx="9.1" cy="9.1" r="6.9" stroke="#b28000" stroke-width="2.5" fill="none"/><path d="M4.3 4.3 L13.9 13.9" stroke="#b28000" stroke-width="3.4"/></svg>
<span class="t" style="top:1072px;height:34px;line-height:34px;font-size:24px;color:#2e1d00;letter-spacing:0.872px;left:2079px;-webkit-text-stroke:0.4px #2e1d00;">Payment pending</span>
<div class="bdg" style="left:2417.3px;top:1069.0px;width:168.5px;height:40px;background:#ffe88f"></div>
<svg style="left:2427.8px;top:1080px;" width="18" height="18" viewBox="0 0 18 18"><rect x="2.2" y="2.1" width="13.8" height="13.9" rx="5.6" stroke="#a67c05" stroke-width="2.5" fill="none"/></svg>
<span class="t" style="top:1072px;height:34px;line-height:34px;font-size:24px;color:#2b2000;letter-spacing:1.061px;left:2458.3px;-webkit-text-stroke:0.4px #2b2000;">Unfulfilled</span>
<div class="rowline" style="left:666px;top:1128.5px;width:2126px;height:2px;"></div>
<div class="cb" style="left:690px;top:1153.5px;width:32px;height:32px;"></div>
<span class="t" style="top:1151.5px;height:36px;line-height:36px;font-size:26px;color:#303030;letter-spacing:0.422px;left:746.8px;-webkit-text-stroke:0.62px;">#1014</span>
<svg style="left:897px;top:1154px;" width="26" height="32" viewBox="0 0 26 32"><path d="M7 3.5 H15.8 L22.5 10.2 V24.8 a3.5 3.5 0 0 1 -3.5 3.5 H7 a3.5 3.5 0 0 1 -3.5 -3.5 V7 a3.5 3.5 0 0 1 3.5 -3.5Z" stroke="#4a4a4a" stroke-width="2.9" fill="none" stroke-linejoin="round"/><path d="M13.4 3 V9.5 a3 3 0 0 0 3 3 H23 L16 4 Z" fill="#4a4a4a"/><path d="M9.6 16.4 H16.5 M9.6 22.4 H14.7" stroke="#4a4a4a" stroke-width="2.7" stroke-linecap="round"/></svg>
<svg style="left:932px;top:1154px;" width="34" height="34" viewBox="0 0 34 34"><path d="M12.55 3.55 H21.35 A9 9 0 0 1 30.35 12.55 V14.55 A9 9 0 0 1 21.35 23.55 H19.6 L13.8 30.1 C12.9 31.1 11.5 30.5 11.5 29.3 V23.4 A9 9 0 0 1 3.55 14.55 V12.55 A9 9 0 0 1 12.55 3.55 Z" stroke="#4a4a4a" stroke-width="2.9" fill="none" stroke-linejoin="round"/><path d="M10.7 11.5 H21.5 M10.7 16.6 H17.3" stroke="#4a4a4a" stroke-width="2.7" stroke-linecap="round"/></svg>
<span class="t" style="top:1151.5px;height:36px;line-height:36px;font-size:26px;color:#303030;letter-spacing:0.800px;left:1033px;">Jul 20 at 2:09 p.m.</span>
<svg style="left:1419px;top:1156px;" width="28" height="28" viewBox="0 0 28 28"><circle cx="14" cy="8" r="4.6" stroke="#4a4a4a" stroke-width="2.8" fill="none"/><path d="M4.9 24.5 c-1.3 0 -1.9 -1.3 -1.1 -2.3 C6 19 9.6 17.3 14 17.3 s8 1.700 10.2 4.900 c.8 1 .2 2.300 -1.100 2.300 Z" stroke="#4a4a4a" stroke-width="2.8" fill="none" stroke-linejoin="round"/></svg>
<span class="t" style="top:1151.5px;height:36px;line-height:36px;font-size:26px;color:#303030;letter-spacing:0.994px;left:1462.3px;">Jocelyn Curtis</span>
<span class="t" style="top:1151.5px;height:36px;line-height:36px;font-size:26px;color:#303030;letter-spacing:2.169px;right:991.031px;">$405.47</span>
<div class="bdg" style="left:2038px;top:1149.0px;width:100.9px;height:40px;background:#f3f3f3"></div>
<svg style="left:2046px;top:1159px;" width="24" height="20" viewBox="0 0 24 20"><path d="M2.4 10.5 L7.9 17.6 L21 2.8" stroke="#333333" stroke-width="2.3" fill="none"/></svg>
<span class="t" style="top:1152px;height:34px;line-height:34px;font-size:24px;color:#303030;letter-spacing:-0.282px;left:2079px;-webkit-text-stroke:0.4px #303030;">Paid</span>
<div class="bdg" style="left:2417.3px;top:1149.0px;width:245.5px;height:40px;background:#e0f0ff"></div>
<svg style="left:2428.3px;top:1160px;" width="18" height="18" viewBox="0 0 18 18"><circle cx="9.1" cy="9.1" r="6.9" stroke="#0a7ad1" stroke-width="2.5" fill="none"/><path d="M4.3 4.3 L13.9 13.9" stroke="#0a7ad1" stroke-width="3.4"/></svg>
<span class="t" style="top:1152px;height:34px;line-height:34px;font-size:24px;color:#00527c;letter-spacing:0.860px;left:2458.3px;-webkit-text-stroke:0.4px #00527c;">Ready for pickup</span>
<div class="rowline" style="left:666px;top:1208.5px;width:2126px;height:2px;"></div>
<div class="cb" style="left:690px;top:1233.5px;width:32px;height:32px;"></div>
<span class="t" style="top:1231.5px;height:36px;line-height:36px;font-size:26px;color:#303030;letter-spacing:0.247px;left:746.8px;-webkit-text-stroke:0.62px;">#1013</span>
<svg style="left:897px;top:1234px;" width="26" height="32" viewBox="0 0 26 32"><path d="M7 3.5 H15.8 L22.5 10.2 V24.8 a3.5 3.5 0 0 1 -3.5 3.5 H7 a3.5 3.5 0 0 1 -3.5 -3.5 V7 a3.5 3.5 0 0 1 3.5 -3.5Z" stroke="#4a4a4a" stroke-width="2.9" fill="none" stroke-linejoin="round"/><path d="M13.4 3 V9.5 a3 3 0 0 0 3 3 H23 L16 4 Z" fill="#4a4a4a"/><path d="M9.6 16.4 H16.5 M9.6 22.4 H14.7" stroke="#4a4a4a" stroke-width="2.7" stroke-linecap="round"/></svg>
<svg style="left:932px;top:1234px;" width="34" height="34" viewBox="0 0 34 34"><path d="M12.55 3.55 H21.35 A9 9 0 0 1 30.35 12.55 V14.55 A9 9 0 0 1 21.35 23.55 H19.6 L13.8 30.1 C12.9 31.1 11.5 30.5 11.5 29.3 V23.4 A9 9 0 0 1 3.55 14.55 V12.55 A9 9 0 0 1 12.55 3.55 Z" stroke="#4a4a4a" stroke-width="2.9" fill="none" stroke-linejoin="round"/><path d="M10.7 11.5 H21.5 M10.7 16.6 H17.3" stroke="#4a4a4a" stroke-width="2.7" stroke-linecap="round"/></svg>
<span class="t" style="top:1231.5px;height:36px;line-height:36px;font-size:26px;color:#303030;letter-spacing:0.800px;left:1033px;">Jul 20 at 2:08 p.m.</span>
<svg style="left:1419px;top:1236px;" width="28" height="28" viewBox="0 0 28 28"><circle cx="14" cy="8" r="4.6" stroke="#4a4a4a" stroke-width="2.8" fill="none"/><path d="M4.9 24.5 c-1.3 0 -1.9 -1.3 -1.1 -2.3 C6 19 9.6 17.3 14 17.3 s8 1.700 10.2 4.900 c.8 1 .2 2.300 -1.100 2.300 Z" stroke="#4a4a4a" stroke-width="2.8" fill="none" stroke-linejoin="round"/></svg>
<span class="t" style="top:1231.5px;height:36px;line-height:36px;font-size:26px;color:#303030;letter-spacing:0.931px;left:1462.3px;">Craig Herwitz</span>
<span class="t" style="top:1231.5px;height:36px;line-height:36px;font-size:26px;color:#303030;letter-spacing:2.169px;right:991.031px;">$689.75</span>
<div class="bdg" style="left:2038px;top:1229.0px;width:100.9px;height:40px;background:#f3f3f3"></div>
<svg style="left:2046px;top:1239px;" width="24" height="20" viewBox="0 0 24 20"><path d="M2.4 10.5 L7.9 17.6 L21 2.8" stroke="#333333" stroke-width="2.3" fill="none"/></svg>
<span class="t" style="top:1232px;height:34px;line-height:34px;font-size:24px;color:#303030;letter-spacing:-0.282px;left:2079px;-webkit-text-stroke:0.4px #303030;">Paid</span>
<div class="bdg" style="left:2417.3px;top:1229.0px;width:168.5px;height:40px;background:#ffe88f"></div>
<svg style="left:2427.8px;top:1240px;" width="18" height="18" viewBox="0 0 18 18"><rect x="2.2" y="2.1" width="13.8" height="13.9" rx="5.6" stroke="#a67c05" stroke-width="2.5" fill="none"/></svg>
<span class="t" style="top:1232px;height:34px;line-height:34px;font-size:24px;color:#2b2000;letter-spacing:1.061px;left:2458.3px;-webkit-text-stroke:0.4px #2b2000;">Unfulfilled</span>
<div class="rowline" style="left:666px;top:1288.5px;width:2126px;height:2px;"></div>
<div class="cb" style="left:690px;top:1313.5px;width:32px;height:32px;"></div>
<span class="t" style="top:1311.5px;height:36px;line-height:36px;font-size:26px;color:#303030;letter-spacing:0.247px;left:746.8px;-webkit-text-stroke:0.62px;">#1012</span>
<svg style="left:897px;top:1314px;" width="26" height="32" viewBox="0 0 26 32"><path d="M7 3.5 H15.8 L22.5 10.2 V24.8 a3.5 3.5 0 0 1 -3.5 3.5 H7 a3.5 3.5 0 0 1 -3.5 -3.5 V7 a3.5 3.5 0 0 1 3.5 -3.5Z" stroke="#4a4a4a" stroke-width="2.9" fill="none" stroke-linejoin="round"/><path d="M13.4 3 V9.5 a3 3 0 0 0 3 3 H23 L16 4 Z" fill="#4a4a4a"/><path d="M9.6 16.4 H16.5 M9.6 22.4 H14.7" stroke="#4a4a4a" stroke-width="2.7" stroke-linecap="round"/></svg>
<span class="t" style="top:1311.5px;height:36px;line-height:36px;font-size:26px;color:#303030;letter-spacing:0.800px;left:1033px;">Jul 20 at 2:06 p.m.</span>
<svg style="left:1419px;top:1316px;" width="28" height="28" viewBox="0 0 28 28"><circle cx="14" cy="8" r="4.6" stroke="#4a4a4a" stroke-width="2.8" fill="none"/><path d="M4.9 24.5 c-1.3 0 -1.9 -1.3 -1.1 -2.3 C6 19 9.6 17.3 14 17.3 s8 1.700 10.2 4.900 c.8 1 .2 2.300 -1.100 2.300 Z" stroke="#4a4a4a" stroke-width="2.8" fill="none" stroke-linejoin="round"/></svg>
<span class="t" style="top:1311.5px;height:36px;line-height:36px;font-size:26px;color:#303030;letter-spacing:0.638px;left:1462.3px;">Lincoln Culhane</span>
<span class="t" style="top:1311.5px;height:36px;line-height:36px;font-size:26px;color:#303030;letter-spacing:2.169px;right:991.031px;">$492.32</span>
<div class="bdg" style="left:2038px;top:1309.0px;width:100.9px;height:40px;background:#f3f3f3"></div>
<svg style="left:2046px;top:1319px;" width="24" height="20" viewBox="0 0 24 20"><path d="M2.4 10.5 L7.9 17.6 L21 2.8" stroke="#333333" stroke-width="2.3" fill="none"/></svg>
<span class="t" style="top:1312px;height:34px;line-height:34px;font-size:24px;color:#303030;letter-spacing:-0.282px;left:2079px;-webkit-text-stroke:0.4px #303030;">Paid</span>
<div class="bdg" style="left:2417.3px;top:1309.0px;width:236.5px;height:40px;background:#ffd29c"></div>
<svg style="left:2428.3px;top:1320px;" width="18" height="18" viewBox="0 0 18 18"><circle cx="9.1" cy="9.1" r="6.9" stroke="#b28000" stroke-width="2.5" fill="none"/><path d="M4.3 4.3 L13.9 13.9" stroke="#b28000" stroke-width="3.4"/></svg>
<span class="t" style="top:1312px;height:34px;line-height:34px;font-size:24px;color:#2e1d00;letter-spacing:0.959px;left:2458.3px;-webkit-text-stroke:0.4px #2e1d00;">Partially fulfilled</span>
<div class="rowline" style="left:666px;top:1368.5px;width:2126px;height:2px;"></div>
<div class="cb" style="left:690px;top:1393.5px;width:32px;height:32px;"></div>
<span class="t" style="top:1391.5px;height:36px;line-height:36px;font-size:26px;color:#303030;letter-spacing:-0.244px;left:746.8px;-webkit-text-stroke:0.62px;">#1011</span>
<svg style="left:897px;top:1394px;" width="26" height="32" viewBox="0 0 26 32"><path d="M7 3.5 H15.8 L22.5 10.2 V24.8 a3.5 3.5 0 0 1 -3.5 3.5 H7 a3.5 3.5 0 0 1 -3.5 -3.5 V7 a3.5 3.5 0 0 1 3.5 -3.5Z" stroke="#4a4a4a" stroke-width="2.9" fill="none" stroke-linejoin="round"/><path d="M13.4 3 V9.5 a3 3 0 0 0 3 3 H23 L16 4 Z" fill="#4a4a4a"/><path d="M9.6 16.4 H16.5 M9.6 22.4 H14.7" stroke="#4a4a4a" stroke-width="2.7" stroke-linecap="round"/></svg>
<span class="t" style="top:1391.5px;height:36px;line-height:36px;font-size:26px;color:#303030;letter-spacing:0.600px;left:1033px;">Jul 20 at 1:48 p.m.</span>
<svg style="left:1419px;top:1396px;" width="28" height="28" viewBox="0 0 28 28"><circle cx="14" cy="8" r="4.6" stroke="#4a4a4a" stroke-width="2.8" fill="none"/><path d="M4.9 24.5 c-1.3 0 -1.9 -1.3 -1.1 -2.3 C6 19 9.6 17.3 14 17.3 s8 1.700 10.2 4.900 c.8 1 .2 2.300 -1.100 2.300 Z" stroke="#4a4a4a" stroke-width="2.8" fill="none" stroke-linejoin="round"/></svg>
<span class="t" style="top:1391.5px;height:36px;line-height:36px;font-size:26px;color:#303030;letter-spacing:1.170px;left:1462.3px;">Nolan Torff</span>
<span class="t" style="top:1391.5px;height:36px;line-height:36px;font-size:26px;color:#303030;letter-spacing:2.169px;right:991.031px;">$358.08</span>
<div class="bdg" style="left:2038px;top:1389.0px;width:251.5px;height:40px;background:#ffd29c"></div>
<svg style="left:2049px;top:1400px;" width="18" height="18" viewBox="0 0 18 18"><circle cx="9.1" cy="9.1" r="6.9" stroke="#b28000" stroke-width="2.5" fill="none"/><path d="M4.3 4.3 L13.9 13.9" stroke="#b28000" stroke-width="3.4"/></svg>
<span class="t" style="top:1392px;height:34px;line-height:34px;font-size:24px;color:#2e1d00;letter-spacing:0.872px;left:2079px;-webkit-text-stroke:0.4px #2e1d00;">Payment pending</span>
<div class="bdg" style="left:2417.3px;top:1389.0px;width:168.5px;height:40px;background:#ffe88f"></div>
<svg style="left:2427.8px;top:1400px;" width="18" height="18" viewBox="0 0 18 18"><rect x="2.2" y="2.1" width="13.8" height="13.9" rx="5.6" stroke="#a67c05" stroke-width="2.5" fill="none"/></svg>
<span class="t" style="top:1392px;height:34px;line-height:34px;font-size:24px;color:#2b2000;letter-spacing:1.061px;left:2458.3px;-webkit-text-stroke:0.4px #2b2000;">Unfulfilled</span>
<div class="rowline" style="left:666px;top:1448.5px;width:2126px;height:2px;"></div>
<div class="cb" style="left:690px;top:1473.5px;width:32px;height:32px;"></div>
<span class="t" style="top:1471.5px;height:36px;line-height:36px;font-size:26px;color:#303030;letter-spacing:0.372px;left:746.8px;-webkit-text-stroke:0.62px;">#1010</span>
<svg style="left:897px;top:1474px;" width="26" height="32" viewBox="0 0 26 32"><path d="M7 3.5 H15.8 L22.5 10.2 V24.8 a3.5 3.5 0 0 1 -3.5 3.5 H7 a3.5 3.5 0 0 1 -3.5 -3.5 V7 a3.5 3.5 0 0 1 3.5 -3.5Z" stroke="#4a4a4a" stroke-width="2.9" fill="none" stroke-linejoin="round"/><path d="M13.4 3 V9.5 a3 3 0 0 0 3 3 H23 L16 4 Z" fill="#4a4a4a"/><path d="M9.6 16.4 H16.5 M9.6 22.4 H14.7" stroke="#4a4a4a" stroke-width="2.7" stroke-linecap="round"/></svg>
<span class="t" style="top:1471.5px;height:36px;line-height:36px;font-size:26px;color:#303030;letter-spacing:0.400px;left:1033px;">Jul 13 at 1:53 p.m.</span>
<svg style="left:1419px;top:1476px;" width="28" height="28" viewBox="0 0 28 28"><circle cx="14" cy="8" r="4.6" stroke="#4a4a4a" stroke-width="2.8" fill="none"/><path d="M4.9 24.5 c-1.3 0 -1.9 -1.3 -1.1 -2.3 C6 19 9.6 17.3 14 17.3 s8 1.700 10.2 4.900 c.8 1 .2 2.300 -1.100 2.300 Z" stroke="#4a4a4a" stroke-width="2.8" fill="none" stroke-linejoin="round"/></svg>
<span class="t" style="top:1471.5px;height:36px;line-height:36px;font-size:26px;color:#303030;letter-spacing:0.665px;left:1462.3px;">Marley Siphron</span>
<span class="t" style="top:1471.5px;height:36px;line-height:36px;font-size:26px;color:#303030;letter-spacing:2.169px;right:991.031px;">$134.17</span>
<div class="bdg" style="left:2038px;top:1469.0px;width:100.9px;height:40px;background:#f3f3f3"></div>
<svg style="left:2046px;top:1479px;" width="24" height="20" viewBox="0 0 24 20"><path d="M2.4 10.5 L7.9 17.6 L21 2.8" stroke="#333333" stroke-width="2.3" fill="none"/></svg>
<span class="t" style="top:1472px;height:34px;line-height:34px;font-size:24px;color:#303030;letter-spacing:-0.282px;left:2079px;-webkit-text-stroke:0.4px #303030;">Paid</span>
<div class="bdg" style="left:2417.3px;top:1469.0px;width:245.5px;height:40px;background:#e0f0ff"></div>
<svg style="left:2428.3px;top:1480px;" width="18" height="18" viewBox="0 0 18 18"><circle cx="9.1" cy="9.1" r="6.9" stroke="#0a7ad1" stroke-width="2.5" fill="none"/><path d="M4.3 4.3 L13.9 13.9" stroke="#0a7ad1" stroke-width="3.4"/></svg>
<span class="t" style="top:1472px;height:34px;line-height:34px;font-size:24px;color:#00527c;letter-spacing:0.860px;left:2458.3px;-webkit-text-stroke:0.4px #00527c;">Ready for pickup</span>
<div class="rowline" style="left:666px;top:1528.5px;width:2126px;height:2px;"></div>
<div class="cb" style="left:690px;top:1553.5px;width:32px;height:32px;"></div>
<span class="t" style="top:1551.5px;height:36px;line-height:36px;font-size:26px;color:#303030;letter-spacing:1.422px;left:746.8px;-webkit-text-stroke:0.62px;">#1009</span>
<svg style="left:897px;top:1554px;" width="26" height="32" viewBox="0 0 26 32"><path d="M7 3.5 H15.8 L22.5 10.2 V24.8 a3.5 3.5 0 0 1 -3.5 3.5 H7 a3.5 3.5 0 0 1 -3.5 -3.5 V7 a3.5 3.5 0 0 1 3.5 -3.5Z" stroke="#4a4a4a" stroke-width="2.9" fill="none" stroke-linejoin="round"/><path d="M13.4 3 V9.5 a3 3 0 0 0 3 3 H23 L16 4 Z" fill="#4a4a4a"/><path d="M9.6 16.4 H16.5 M9.6 22.4 H14.7" stroke="#4a4a4a" stroke-width="2.7" stroke-linecap="round"/></svg>
<span class="t" style="top:1551.5px;height:36px;line-height:36px;font-size:26px;color:#303030;letter-spacing:0.485px;left:1033px;">Jul 8 at 1:56 p.m.</span>
<svg style="left:1419px;top:1556px;" width="28" height="28" viewBox="0 0 28 28"><circle cx="14" cy="8" r="4.6" stroke="#4a4a4a" stroke-width="2.8" fill="none"/><path d="M4.9 24.5 c-1.3 0 -1.9 -1.3 -1.1 -2.3 C6 19 9.6 17.3 14 17.3 s8 1.700 10.2 4.900 c.8 1 .2 2.300 -1.100 2.300 Z" stroke="#4a4a4a" stroke-width="2.8" fill="none" stroke-linejoin="round"/></svg>
<span class="t" style="top:1551.5px;height:36px;line-height:36px;font-size:26px;color:#303030;letter-spacing:0.715px;left:1462.3px;">Allison Bothman</span>
<span class="t" style="top:1551.5px;height:36px;line-height:36px;font-size:26px;color:#303030;letter-spacing:2.169px;right:991.031px;">$335.99</span>
<div class="bdg" style="left:2038px;top:1549.0px;width:199.5px;height:40px;background:#ffd29c"></div>
<svg style="left:2049px;top:1560px;" width="18" height="18" viewBox="0 0 18 18"><circle cx="9.1" cy="9.1" r="6.9" stroke="#b28000" stroke-width="2.5" fill="none"/><path d="M4.3 4.3 L13.9 13.9" stroke="#b28000" stroke-width="3.4"/></svg>
<span class="t" style="top:1552px;height:34px;line-height:34px;font-size:24px;color:#2e1d00;letter-spacing:0.738px;left:2079px;-webkit-text-stroke:0.4px #2e1d00;">Partially paid</span>
<div class="bdg" style="left:2417.3px;top:1549.0px;width:236.5px;height:40px;background:#ffd29c"></div>
<svg style="left:2428.3px;top:1560px;" width="18" height="18" viewBox="0 0 18 18"><circle cx="9.1" cy="9.1" r="6.9" stroke="#b28000" stroke-width="2.5" fill="none"/><path d="M4.3 4.3 L13.9 13.9" stroke="#b28000" stroke-width="3.4"/></svg>
<span class="t" style="top:1552px;height:34px;line-height:34px;font-size:24px;color:#2e1d00;letter-spacing:0.959px;left:2458.3px;-webkit-text-stroke:0.4px #2e1d00;">Partially fulfilled</span>
<div class="rowline" style="left:666px;top:1608.5px;width:2126px;height:2px;"></div>
<div class="cb" style="left:690px;top:1633.5px;width:32px;height:32px;"></div>
<span class="t" style="top:1631.5px;height:36px;line-height:36px;font-size:26px;color:#303030;letter-spacing:1.297px;left:746.8px;-webkit-text-stroke:0.62px;">#1008</span>
<svg style="left:897px;top:1634px;" width="26" height="32" viewBox="0 0 26 32"><path d="M7 3.5 H15.8 L22.5 10.2 V24.8 a3.5 3.5 0 0 1 -3.5 3.5 H7 a3.5 3.5 0 0 1 -3.5 -3.5 V7 a3.5 3.5 0 0 1 3.5 -3.5Z" stroke="#4a4a4a" stroke-width="2.9" fill="none" stroke-linejoin="round"/><path d="M13.4 3 V9.5 a3 3 0 0 0 3 3 H23 L16 4 Z" fill="#4a4a4a"/><path d="M9.6 16.4 H16.5 M9.6 22.4 H14.7" stroke="#4a4a4a" stroke-width="2.7" stroke-linecap="round"/></svg>
<span class="t" style="top:1631.5px;height:36px;line-height:36px;font-size:26px;color:#303030;letter-spacing:0.632px;left:1033px;">Jul 7 at 2:24 p.m.</span>
<svg style="left:1419px;top:1636px;" width="28" height="28" viewBox="0 0 28 28"><circle cx="14" cy="8" r="4.6" stroke="#4a4a4a" stroke-width="2.8" fill="none"/><path d="M4.9 24.5 c-1.3 0 -1.9 -1.3 -1.1 -2.3 C6 19 9.6 17.3 14 17.3 s8 1.700 10.2 4.900 c.8 1 .2 2.300 -1.100 2.300 Z" stroke="#4a4a4a" stroke-width="2.8" fill="none" stroke-linejoin="round"/></svg>
<span class="t" style="top:1631.5px;height:36px;line-height:36px;font-size:26px;color:#303030;letter-spacing:0.692px;left:1462.3px;">Tatiana Korsgaard</span>
<span class="t" style="top:1631.5px;height:36px;line-height:36px;font-size:26px;color:#303030;letter-spacing:2.169px;right:991.031px;">$702.13</span>
<div class="bdg" style="left:2038px;top:1629.0px;width:100.9px;height:40px;background:#f3f3f3"></div>
<svg style="left:2046px;top:1639px;" width="24" height="20" viewBox="0 0 24 20"><path d="M2.4 10.5 L7.9 17.6 L21 2.8" stroke="#333333" stroke-width="2.3" fill="none"/></svg>
<span class="t" style="top:1632px;height:34px;line-height:34px;font-size:24px;color:#303030;letter-spacing:-0.282px;left:2079px;-webkit-text-stroke:0.4px #303030;">Paid</span>
<div class="bdg" style="left:2417.3px;top:1629.0px;width:168.5px;height:40px;background:#ffe88f"></div>
<svg style="left:2427.8px;top:1640px;" width="18" height="18" viewBox="0 0 18 18"><rect x="2.2" y="2.1" width="13.8" height="13.9" rx="5.6" stroke="#a67c05" stroke-width="2.5" fill="none"/></svg>
<span class="t" style="top:1632px;height:34px;line-height:34px;font-size:24px;color:#2b2000;letter-spacing:1.061px;left:2458.3px;-webkit-text-stroke:0.4px #2b2000;">Unfulfilled</span>
<div style="left:138px;top:62px;width:2730px;height:84px;background:#1d1e20"></div>
<div style="left:138px;top:146px;width:2730px;height:85px;background:#353537"></div>
<div style="left:138px;top:229px;width:2730px;height:2px;background:#4d4e50"></div>
<div style="left:324px;top:78px;width:480px;height:70px;background:#353537;border-radius:15px 15px 0 0"></div>
<svg style="left:309px;top:131px;" width="15" height="15" viewBox="0 0 15 15"><path d="M15 0 V15 H0 A15 15 0 0 0 15 0Z" fill="#353537"/></svg>
<svg style="left:804px;top:131px;" width="15" height="15" viewBox="0 0 15 15"><path d="M0 0 V15 H15 A15 15 0 0 1 0 0Z" fill="#353537"/></svg>
<div style="left:180px;top:93px;width:24px;height:24px;background:#f5a62b;border-radius:50%"></div>
<div style="left:220px;top:93px;width:24px;height:24px;background:#fdb52b;border-radius:50%"></div>
<div style="left:260px;top:93px;width:24px;height:24px;background:#089a27;border-radius:50%"></div>
<svg style="left:350px;top:95px;" width="28" height="33" viewBox="0 0 28 33"><path d="M2 9 L19 5 L27 28 L5 32 Z" fill="#b0935a"/><path d="M19 5 L23 7 L27 28 L22 29 Z" fill="#8a7243"/><path d="M8 9 C8 3 16 0 17 7" stroke="#c9b27a" stroke-width="1.6" fill="none"/><text x="7" y="27" font-family="Liberation Sans" font-weight="700" font-style="italic" font-size="19" fill="#fff">S</text></svg>
<span class="t" style="top:95px;height:34px;line-height:34px;font-size:24px;color:#e8eaed;letter-spacing:0.686px;left:398px;-webkit-text-stroke:0.3px #e8eaed;">Design Uplift</span>
<svg style="left:762px;top:102px;" width="20" height="20" viewBox="0 0 20 20"><path d="M3 3 L17 17 M17 3 L3 17" stroke="#f1f3f4" stroke-width="2.6" fill="none" stroke-linecap="round"/></svg>
<svg style="left:836px;top:100px;" width="24" height="24" viewBox="0 0 24 24"><path d="M12 2.2 V21.8 M2.2 12 H21.8" stroke="#f1f3f4" stroke-width="4.4" fill="none" stroke-linecap="round"/></svg>
<svg style="left:2813px;top:104px;" width="22" height="16" viewBox="0 0 22 16"><path d="M2 3 L11 12 L20 3" stroke="#e8eaed" stroke-width="3" fill="none"/></svg>
<svg style="left:168px;top:174px;" width="28" height="28" viewBox="0 0 28 28"><path d="M27 14 H3 M14 2.5 L2.5 14 L14 25.5" stroke="#e8eaed" stroke-width="3" fill="none"/></svg>
<svg style="left:232px;top:174px;" width="28" height="28" viewBox="0 0 28 28"><path d="M1 14 H25 M14 2.5 L25.5 14 L14 25.5" stroke="#7e7f81" stroke-width="3" fill="none"/></svg>
<svg style="left:296px;top:173px;" width="30" height="30" viewBox="0 0 30 30"><path d="M24.5 9.5 A11.5 11.5 0 1 0 26.3 17" stroke="#e8eaed" stroke-width="3" fill="none"/><path d="M27.5 2 V13 H16.5 Z" fill="#e8eaed"/></svg>
<div style="left:354px;top:154px;width:1914px;height:68px;background:#1f2022;border-radius:34px"></div>
<svg style="left:382px;top:177px;" width="18" height="23" viewBox="0 0 18 23"><rect x="0" y="8.5" width="18" height="14.5" rx="2.5" fill="#9ea0a3"/><path d="M4.2 9 V6 a4.8 4.8 0 0 1 9.6 0 V9" stroke="#9ea0a3" stroke-width="2.6" fill="none"/></svg>
<span class="t" style="top:168.5px;height:39px;line-height:39px;font-size:28px;color:#e8eaed;letter-spacing:1.288px;left:423px;-webkit-text-stroke:0.3px #e8eaed;">polaris-design-uplift.shopify.io</span>
<span class="t" style="top:168.5px;height:39px;line-height:39px;font-size:28px;color:#8f9194;letter-spacing:1.202px;left:830px;">/admin-uplift/orders</span>
<svg style="left:2156px;top:173px;" width="24" height="31" viewBox="0 0 24 31"><path d="M7 11.5 H4.5 a2.5 2.5 0 0 0 -2.5 2.5 V26.5 a2.5 2.5 0 0 0 2.5 2.5 H19.5 a2.5 2.5 0 0 0 2.5 -2.5 V14 a2.5 2.5 0 0 0 -2.5 -2.5 H17" stroke="#c6c8cb" stroke-width="2.6" fill="none"/><path d="M12 20 V3 M6.5 8 L12 2.5 L17.5 8" stroke="#c6c8cb" stroke-width="2.6" fill="none"/></svg>
<svg style="left:2217px;top:173px;" width="30" height="29" viewBox="0 0 30 29"><path d="M15 3 L18.6 11.3 L27.5 12.1 L20.8 18 L22.8 26.8 L15 22.2 L7.2 26.8 L9.2 18 L2.5 12.1 L11.4 11.3 Z" stroke="#c6c8cb" stroke-width="2.6" fill="none" stroke-linejoin="round"/></svg>
<svg style="left:2295px;top:174px;" width="34" height="22" viewBox="0 0 34 22"><rect x="1" y="1" width="32" height="21" fill="#f6efe8"/><path d="M1 1 H33 V7 L17 19.500 L1 7 Z" fill="#a83b1c"/><path d="M5.500 1 H28.500 L17 10.500 Z" fill="#f6efe8"/><rect x="1" y="1" width="32" height="21" stroke="#a83b1c" stroke-width="2" fill="none"/></svg>
<div style="left:2292px;top:192px;width:40px;height:23px;background:#7d2410;border-radius:3px"></div>
<span class="t" style="top:194px;height:24px;line-height:24px;font-size:17px;color:#ffffff;letter-spacing:0.562px;left:2312.28px;transform:translateX(-50%);-webkit-text-stroke:0.5px;">159</span>
<div style="left:2360px;top:174px;width:32px;height:28px;background:#fff;border-radius:5px"></div>
<div style="left:2361.5px;top:175.5px;width:29px;height:25px;background:#fff;border:2.2px solid #000;border-radius:3.5px"></div>
<div style="left:2375px;top:186.5px;width:10.5px;height:8px;background:#000"></div>
<div style="left:2424px;top:172px;width:32px;height:32px;background:#20282a;border-radius:3px;opacity:.55"></div>
<svg style="left:2422px;top:170px;" width="36" height="36" viewBox="0 0 36 36"><g transform="rotate(-42 18 18) translate(18 18) scale(.8) translate(-18 -18)" stroke="#fff" stroke-width="3.800" fill="none"><rect x="1.500" y="13.300" width="17" height="9.400" rx="4.700"/><rect x="17.500" y="13.300" width="17" height="9.400" rx="4.700"/></g></svg>
<div style="left:2490.5px;top:173.5px;width:28.5px;height:28.5px;background:radial-gradient(circle at 40% 35%,#8cc6dd,#6aaed0);border-radius:50%"></div>
<span class="t" style="top:171px;height:32px;line-height:32px;font-size:23px;color:#ffffff;left:2504.5px;transform:translateX(-50%);font-family:"DejaVu Sans",sans-serif;">⌘</span>
<div style="left:2508px;top:192px;width:24px;height:23.5px;background:#231815;border-radius:4px"></div>
<span class="t" style="top:194px;height:24px;line-height:24px;font-size:17px;color:#ffffff;left:2519.5px;transform:translateX(-50%);-webkit-text-stroke:0.5px;">1</span>
<div style="left:2553.5px;top:173px;width:30px;height:30px;background:#fff;border-radius:50%;box-shadow:0 0 0 1.5px #111"></div>
<div style="left:2555.5px;top:175px;width:26px;height:26px;background:#fff;border-radius:50%;border:4px solid #1a6fd6"></div>
<div style="left:2566px;top:181px;width:5px;height:14px;background:#4a4f57;border-radius:1px"></div>
<div style="left:2571px;top:191px;width:15px;height:15px;background:#2a2b2d;border-radius:50%"></div>
<svg style="left:2572.5px;top:192px;" width="12" height="12" viewBox="0 0 12 12"><rect x="2" y="5.500" width="8" height="6" rx="1" fill="#fff"/><path d="M3.800 6 V4.200 a2.200 2.200 0 0 1 4.400 0 V6" stroke="#fff" stroke-width="1.600" fill="none"/></svg>
<svg style="left:2618px;top:172.5px;" width="30" height="30" viewBox="0 0 30 30"><path d="M1.2 6.5 H7.2 V4.3 a3.85 3.85 0 1 1 7.7 0 V6.5 H23.1 V13.6 H25.2 a3.85 3.85 0 1 1 0 7.7 H23.1 V28.5 H14.6 V27 a3 3 0 1 0 -6 0 V28.5 H1.2 V21 H2.7 a3 3 0 1 0 0 -6 H1.2 Z" fill="#f1f1f1"/></svg>
<div style="left:2682px;top:174px;width:28px;height:28px;background:#f1f1f1"></div>
<div style="left:2686px;top:178px;width:14px;height:20px;background:#353638"></div>
<div style="left:2738px;top:166px;width:44px;height:44px;border-radius:50%;background:linear-gradient(100deg,#c4c4c4 0%,#e4e4e4 40%,#f2f2f2 100%);overflow:hidden"><div style="left:4px;top:33px;width:36px;height:18px;border-radius:50% 50% 0 0;background:#a8a8a8"></div><div style="left:17px;top:28px;width:10px;height:9px;background:#9c9c9c"></div><div style="left:12.500px;top:3.500px;width:19px;height:24px;border-radius:48% 48% 45% 45%;background:linear-gradient(180deg,#d2d2d2,#b9b9b9 60%)"></div><div style="left:13px;top:17px;width:18px;height:17px;border-radius:30% 30% 50% 50%;background:#1e1e1e"></div><div style="left:15.500px;top:14px;width:13px;height:2.200px;background:#4d4d4d;border-radius:1px"></div><div style="left:19px;top:16px;width:6px;height:4px;background:#a9a9a9;border-radius:40%"></div></div>
<div style="left:2820.6px;top:174.7px;width:6.6px;height:6.6px;background:#f1f1f1;border-radius:50%"></div>
<div style="left:2820.6px;top:184.7px;width:6.6px;height:6.6px;background:#f1f1f1;border-radius:50%"></div>
<div style="left:2820.6px;top:194.89999999999998px;width:6.6px;height:6.6px;background:#f1f1f1;border-radius:50%"></div>
<div style="left:138px;top:231px;width:2730px;height:113px;background:#1a1a1a"></div>
<svg style="left:168px;top:262px;" width="48" height="52" viewBox="0 0 48 52"><path d="M5.700 15.100 L31.300 7.200 V49.200 L2.100 44.400 Z" fill="#fff"/><path d="M32.200 7.800 L38 11.500 L44.700 45.600 L32.200 49.200 Z" fill="#fff"/><path d="M12.400 14 C13.500 8 17 2.600 21 2.400 C24.500 2.300 27.500 5.500 28.900 9" stroke="#fff" stroke-width="1.700" fill="none"/><path d="M17.500 12.500 C18.500 8 21 3.800 24.500 3.600 C27.500 3.500 30.500 5.500 31.800 8" stroke="#fff" stroke-width="1.500" fill="none"/><text x="0" y="41.800" transform="translate(10.500 0) scale(.760 1)" font-family="Liberation Sans" font-weight="700" font-style="italic" font-size="33" fill="#1a1a1a">S</text></svg>
<span class="t" style="top:258.8px;height:60px;line-height:60px;font-size:40px;color:#ffffff;font-weight:700;transform:scaleX(0.8577);transform-origin:0 50%;left:219.4px;font-style:italic;-webkit-text-stroke:0.6px #fff;">shopify</span>
<div style="left:1086px;top:256px;width:912px;height:64px;background:#2e2e2e;border:1px solid #494949;border-radius:16px"></div>
<svg style="left:1102px;top:273px;" width="30" height="30" viewBox="0 0 30 30"><circle cx="11.5" cy="11.5" r="8" stroke="#666" stroke-width="3.2" fill="none"/><path d="M17.5 17.5 L26 26" stroke="#666" stroke-width="3.4" stroke-linecap="round"/></svg>
<span class="t" style="top:271px;height:34px;line-height:34px;font-size:24px;color:#7f7f7f;letter-spacing:-0.109px;left:1147px;">Search</span>
<div style="left:2466px;top:256px;width:64px;height:64px;background:#2c2c2c;border-radius:16px"></div>
<svg style="left:2484px;top:274px;" width="28" height="30" viewBox="0 0 28 30"><path d="M14 2.5 c-5 0 -8.2 3.8 -8.2 8.5 v4.5 c0 2 -1.2 3.2 -2.6 4.6 c-.8 .8 -.3 2.2 .9 2.2 H23.9 c1.200 0 1.700 -1.400 .9 -2.200 c-1.400 -1.400 -2.600 -2.600 -2.600 -4.600 V11 c0 -4.700 -3.200 -8.500 -8.200 -8.500Z" stroke="#e3e3e3" stroke-width="2.8" fill="none" stroke-linejoin="round"/><path d="M10.5 25.5 a3.6 3.6 0 0 0 7 0" stroke="#e3e3e3" stroke-width="2.6" fill="none" stroke-linecap="round"/></svg>
<div style="left:2500px;top:262px;width:24px;height:24px;background:#cd8b0c;border-radius:50%"></div>
<span class="t" style="top:261.5px;height:25px;line-height:25px;font-size:18px;color:#ffffff;font-weight:700;left:2511.7px;transform:translateX(-50%);">1</span>
<div style="left:2546px;top:256px;width:290px;height:64px;background:#2c2c2c;border-radius:16px"></div>
<span class="t" style="top:270px;height:36px;line-height:36px;font-size:26px;color:#e3e3e3;letter-spacing:-0.390px;left:2563px;">Lee-Ann Webster</span>
<div style="left:2776px;top:260px;width:56px;height:56px;background:#1d4d73;border-radius:14px"></div>
<span class="t" style="top:270.5px;height:35px;line-height:35px;font-size:25px;color:#e6eef5;letter-spacing:-0.156px;left:2803.92px;transform:translateX(-50%);">LW</span>
<div style="left:138px;top:62px;width:2730px;height:2px;background:rgba(255,255,255,.38)"></div>
<div style="left:2866px;top:64px;width:2px;height:280px;background:rgba(255,255,255,.12)"></div>
<div style="left:138px;top:64px;width:2px;height:280px;background:rgba(255,255,255,.12)"></div>
<svg style="left:375px;top:555.6px;filter:drop-shadow(0 2px 2px rgba(0,0,0,.4));" width="34" height="36" viewBox="0 0 34 36"><path d="M9.700 1.100 C11.400 1.100 12.500 2.300 12.800 4 L14.600 12.600 C15 10.500 16 9 17.300 9.100 C18.800 9.200 19.800 10.500 19.900 13.900 C20 11 21.500 9.400 23.100 9.500 C24.800 9.600 25.800 11.200 25.900 14.300 C26.200 12.500 27.600 11.300 29.200 11.500 C30.800 11.800 31.400 13 31.200 14.600 L30.400 21.100 C30 24.500 27.500 26.500 26.300 29.200 L25.900 32.400 L22.700 32.800 L21.100 29.600 L19.100 32.600 L12.300 32.600 L10.700 29.200 L1.900 17.100 C1 15.800 1.500 14.300 3.100 13.500 C4.200 13 5.200 13.200 5.900 13.900 L9.900 18.300 L7.100 4.200 C6.900 2.400 8 1.100 9.700 1.100 Z" fill="#fff" stroke="#000" stroke-width="1.800" stroke-linejoin="round"/><path d="M15.900 19.100 V26.700 M19.900 19.100 V26.700 M24.100 19.100 V26.700" stroke="#000" stroke-width="1.600"/></svg>
</div></div>

</body></html>
